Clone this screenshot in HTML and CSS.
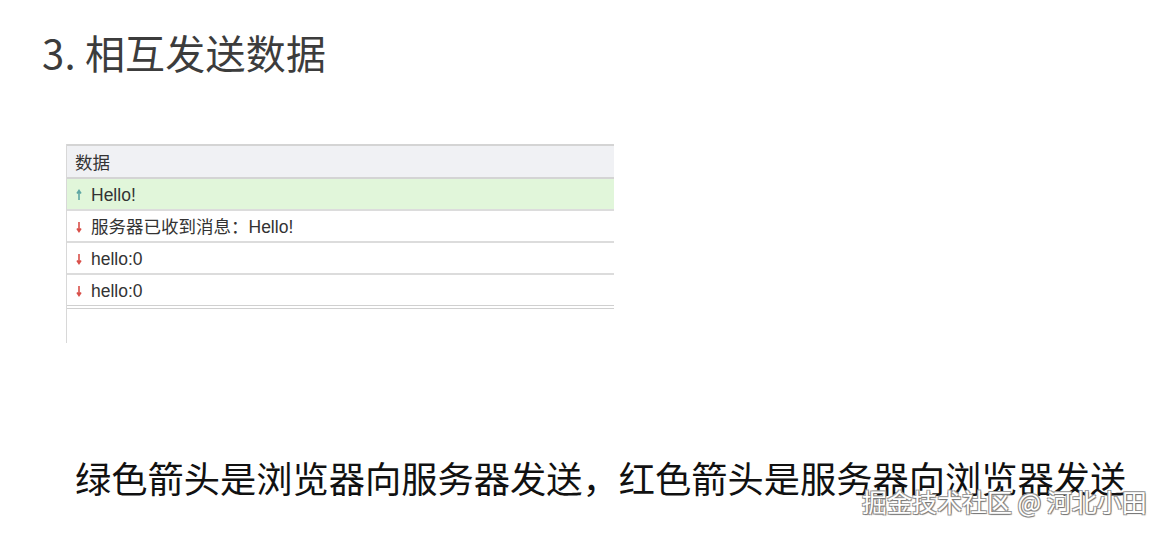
FILE: index.html
```html
<!DOCTYPE html>
<html lang="zh">
<head>
<meta charset="utf-8">
<link rel="stylesheet" href="styles.css">
</head>
<body>
<div class="page">
  <h1 class="title">3. 相互发送数据</h1>
  <div class="panel">
    <div class="head">数据</div>
    <div class="row sent"><svg class="arrow" viewBox="0 0 6 12" width="6" height="12"><path d="M3 11V2M1 4.5L3 1.5L5 4.5" stroke="#5fa7a4" stroke-width="1.6" fill="none"/></svg><span>Hello!</span></div>
    <div class="row"><svg class="arrow" viewBox="0 0 6 12" width="6" height="12"><path d="M3 1V10M1 7.5L3 10.5L5 7.5" stroke="#d9504a" stroke-width="1.6" fill="none"/></svg><span>服务器已收到消息：Hello!</span></div>
    <div class="row"><svg class="arrow" viewBox="0 0 6 12" width="6" height="12"><path d="M3 1V10M1 7.5L3 10.5L5 7.5" stroke="#d9504a" stroke-width="1.6" fill="none"/></svg><span>hello:0</span></div>
    <div class="row last"><svg class="arrow" viewBox="0 0 6 12" width="6" height="12"><path d="M3 1V10M1 7.5L3 10.5L5 7.5" stroke="#d9504a" stroke-width="1.6" fill="none"/></svg><span>hello:0</span></div>
    <div class="empty"></div>
  </div>
  <p class="caption">绿色箭头是浏览器向服务器发送，红色箭头是服务器向浏览器发送</p>
  <div class="watermark">掘金技术社区 @ 河北小田</div>
</div>
</body>
</html>
```
FILE: styles.css
```css
html, body {
  margin: 0;
  padding: 0;
  background: #ffffff;
}
.page {
  position: relative;
  width: 1164px;
  height: 533px;
  overflow: hidden;
  font-family: "Noto Sans CJK SC", "Noto Sans", sans-serif;
}
.title {
  margin: 0;
  padding: 24px 0 0 42px;
  font-size: 40px;
  font-weight: 400;
  line-height: 56px;
  color: #3c3c3c;
  letter-spacing: 0.2px;
}
.panel {
  margin: 64px 0 0 66px;
  width: 547px;
  border-left: 1px solid #d8d8d8;
}
.head {
  height: 31px;
  border-top: 2px solid #d4d4d4;
  border-bottom: 2px solid #d4d4d4;
  background: #f0f1f4;
  padding-left: 8px;
  font-size: 17.5px;
  line-height: 31px;
  color: #333;
}
.row {
  height: 30px;
  display: flex;
  align-items: center;
  gap: 9px;
  padding-left: 9px;
  border-bottom: 2px solid #dcdcdc;
  font-family: "Liberation Sans", "Noto Sans CJK SC", sans-serif;
  font-size: 17.5px;
  color: #333;
  background: #fff;
}
.row span {
  line-height: 30px;
  padding-top: 2px;
}
.row.sent {
  background: #e1f6da;
}
.row.last {
  border-bottom: 4px double #d0d0d0;
}
.arrow {
  flex: none;
  margin-top: 2px;
}
.empty {
  height: 34px;
}
.caption {
  margin: 110px 0 0 75px;
  font-size: 36.25px;
  line-height: 48px;
  color: #111;
  white-space: nowrap;
}
.watermark {
  position: absolute;
  left: 862px;
  top: 484px;
  font-size: 25px;
  line-height: 34px;
  color: #ffffff;
  text-shadow: 1px 1px 1px #777, -1px -1px 0 #999, 1px -1px 0 #999, -1px 1px 0 #999;
  white-space: nowrap;
}
```
